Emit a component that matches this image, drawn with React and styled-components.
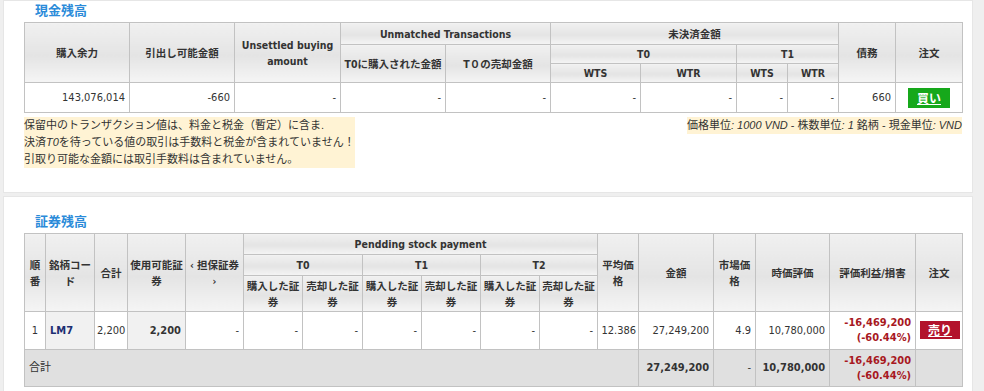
import { styled, createGlobalStyle } from 'styled-components'

const GlobalStyle = createGlobalStyle`
    body {
        margin: 0;
        background: #efefef;
        font-family: Tahoma, 'DejaVu Sans Condensed', 'Noto Sans CJK JP', sans-serif;
        font-size: 11px;
        color: #333;
    }
`;

const topCols = [105, 105, 106, 105, 105, 90, 96, 51, 51, 57, 67]
const stockCols = [21, 49, 33, 58, 58, 59, 60, 59, 59, 59, 58, 41, 75, 42, 74, 86, 47]

export default function App() {
    return (
        <Page>
            <GlobalStyle />
            <Panel $top='1px' $bottom='24px'>
                <Title>現金残高</Title>
                <Grid>
                    <colgroup>
                        {topCols.map((w, i) => <col key={i} style={{ width: w }} />)}
                    </colgroup>
                    <thead>
                        <tr>
                            <Th rowSpan={3}>購入余力</Th>
                            <Th rowSpan={3}>引出し可能金額</Th>
                            <Th rowSpan={3}>Unsettled buying amount</Th>
                            <Th colSpan={2} $h='21px'>Unmatched Transactions</Th>
                            <Th colSpan={4}>未決済金額</Th>
                            <Th rowSpan={3}>債務</Th>
                            <Th rowSpan={3}>注文</Th>
                        </tr>
                        <tr>
                            <Th rowSpan={2}>T0に購入された金額</Th>
                            <Th rowSpan={2}>T０の売却金額</Th>
                            <Th colSpan={2} $h='18px'>T0</Th>
                            <Th colSpan={2}>T1</Th>
                        </tr>
                        <tr>
                            <Th $h='18px'>WTS</Th>
                            <Th>WTR</Th>
                            <Th>WTS</Th>
                            <Th>WTR</Th>
                        </tr>
                    </thead>
                    <tbody>
                        <tr>
                            <Td $h='29px'>143,076,014</Td>
                            <Td>-660</Td>
                            <Td>-</Td>
                            <Td>-</Td>
                            <Td>-</Td>
                            <Td>-</Td>
                            <Td>-</Td>
                            <Td>-</Td>
                            <Td>-</Td>
                            <Td>660</Td>
                            <Td $align='center'><OrderButton $bg='#16a81b' $w='42px' $hgt='20px'>買い</OrderButton></Td>
                        </tr>
                    </tbody>
                </Grid>
                <NoteRow>
                    <Note>
                        <div>保留中のトランザクション値は、料金と税金（暫定）に含ま.</div>
                        <div>決済<i>T0</i>を待っている値の取引は手数料と税金が含まれていません！</div>
                        <div>引取り可能な金額には取引手数料は含まれていません。</div>
                    </Note>
                    <Note>
                        価格単位<i>: 1000 VND</i> - 株数単位<i>: 1</i> 銘柄 - 現金単位<i>: VND</i>
                    </Note>
                </NoteRow>
            </Panel>
            <Panel $top='16px' $bottom='20px'>
                <Title>証券残高</Title>
                <Grid>
                    <colgroup>
                        {stockCols.map((w, i) => <col key={i} style={{ width: w }} />)}
                    </colgroup>
                    <thead>
                        <tr>
                            <Th rowSpan={3}>順番</Th>
                            <Th rowSpan={3}>銘柄コード</Th>
                            <Th rowSpan={3}>合計</Th>
                            <Th rowSpan={3}>使用可能証券</Th>
                            <Th rowSpan={3}>‹ 担保証券 ›</Th>
                            <Th colSpan={6} $h='20px'>Pendding stock payment</Th>
                            <Th rowSpan={3}>平均価格</Th>
                            <Th rowSpan={3}>金額</Th>
                            <Th rowSpan={3}>市場価格</Th>
                            <Th rowSpan={3}>時価評価</Th>
                            <Th rowSpan={3}>評価利益/損害</Th>
                            <Th rowSpan={3}>注文</Th>
                        </tr>
                        <tr>
                            <Th colSpan={2} $h='20px'>T0</Th>
                            <Th colSpan={2}>T1</Th>
                            <Th colSpan={2}>T2</Th>
                        </tr>
                        <tr>
                            {[0, 1, 2].map(i => [
                                <Th key={'b' + i} $h='35px'>購入した証券</Th>,
                                <Th key={'s' + i}>売却した証券</Th>,
                            ])}
                        </tr>
                    </thead>
                    <tbody>
                        <tr>
                            <Td $h='37px' $align='center'>1</Td>
                            <Td $align='left' $bg='#f1f1f1'><Code>LM7</Code></Td>
                            <Td $pad='2px'>2,200</Td>
                            <Td $bg='#f1f1f1'><b>2,200</b></Td>
                            <Td>-</Td>
                            <Td>-</Td>
                            <Td>-</Td>
                            <Td>-</Td>
                            <Td>-</Td>
                            <Td>-</Td>
                            <Td>-</Td>
                            <Td $pad='2px'>12.386</Td>
                            <Td>27,249,200</Td>
                            <Td>4.9</Td>
                            <Td>10,780,000</Td>
                            <Td><Loss>-16,469,200<br />(-60.44%)</Loss></Td>
                            <Td $align='center'><OrderButton $bg='#b3132c' $w='40px' $hgt='18px'>売り</OrderButton></Td>
                        </tr>
                        <tr>
                            <Td colSpan={12} $h='36px' $align='left' $bg='#e0e0e0'>合計</Td>
                            <Td $bg='#e0e0e0'><b>27,249,200</b></Td>
                            <Td $bg='#e0e0e0'>-</Td>
                            <Td $bg='#e0e0e0'><b>10,780,000</b></Td>
                            <Td $bg='#e0e0e0'><Loss>-16,469,200<br />(-60.44%)</Loss></Td>
                            <Td $bg='#e0e0e0'></Td>
                        </tr>
                    </tbody>
                </Grid>
            </Panel>
        </Page>
    )
}

const Page = styled.div`
    display: flex;
    flex-direction: column;
    gap: 3px;
    padding: 0 11px 0 3px;
`;
const Panel = styled.section`
    background: #fff;
    border: 1px solid #e6e6e6;
    padding: ${props => props.$top} 10px ${props => props.$bottom} 20px;
`;
const Title = styled.h2`
    margin: 0 0 4px 11px;
    height: 16px;
    font-family: 'Noto Sans CJK JP', sans-serif;
    font-size: 13px;
    line-height: 16px;
    font-weight: 700;
    color: #2b8bd9;
`;
const Grid = styled.table`
    width: 938px;
    table-layout: fixed;
    border-collapse: collapse;
`;
const Th = styled.th`
    height: ${props => props.$h || 'auto'};
    padding: 0 2px;
    border: 1px solid #c2c2c2;
    background: linear-gradient(to bottom, #f0f0f0 0%, #e4e4e4 55%, #f5f5f5 100%);
    font-size: 10.5px;
    font-weight: 700;
    color: #333;
    text-align: center;
    vertical-align: middle;
    line-height: 16px;
`;
const Td = styled.td`
    height: ${props => props.$h || 'auto'};
    padding: 0 ${props => props.$pad || '4px'};
    border: 1px solid #c2c2c2;
    background: ${props => props.$bg || '#fff'};
    text-align: ${props => props.$align || 'right'};
    vertical-align: middle;
    line-height: 16px;
    white-space: nowrap;
`;
const Code = styled.span`
    font-weight: 700;
    color: #1c2e72;
`;
const Loss = styled.span`
    display: inline-block;
    font-weight: 700;
    color: #a8191f;
    text-align: right;
    line-height: 15px;
`;
const OrderButton = styled.span`
    display: inline-flex;
    align-items: center;
    justify-content: center;
    width: ${props => props.$w};
    height: ${props => props.$hgt};
    background: ${props => props.$bg};
    color: #fff;
    font-family: 'Noto Sans CJK JP', sans-serif;
    font-size: 12px;
    font-weight: 700;
    text-decoration: underline;
    cursor: pointer;
`;
const NoteRow = styled.div`
    display: flex;
    justify-content: space-between;
    align-items: flex-start;
    width: 938px;
    margin-top: 4px;
`;
const Note = styled.div`
    background: #fff3d4;
    font-family: 'Liberation Sans', 'Noto Sans CJK JP', sans-serif;
    font-size: 11px;
    line-height: 17px;
    color: #333;
`;
